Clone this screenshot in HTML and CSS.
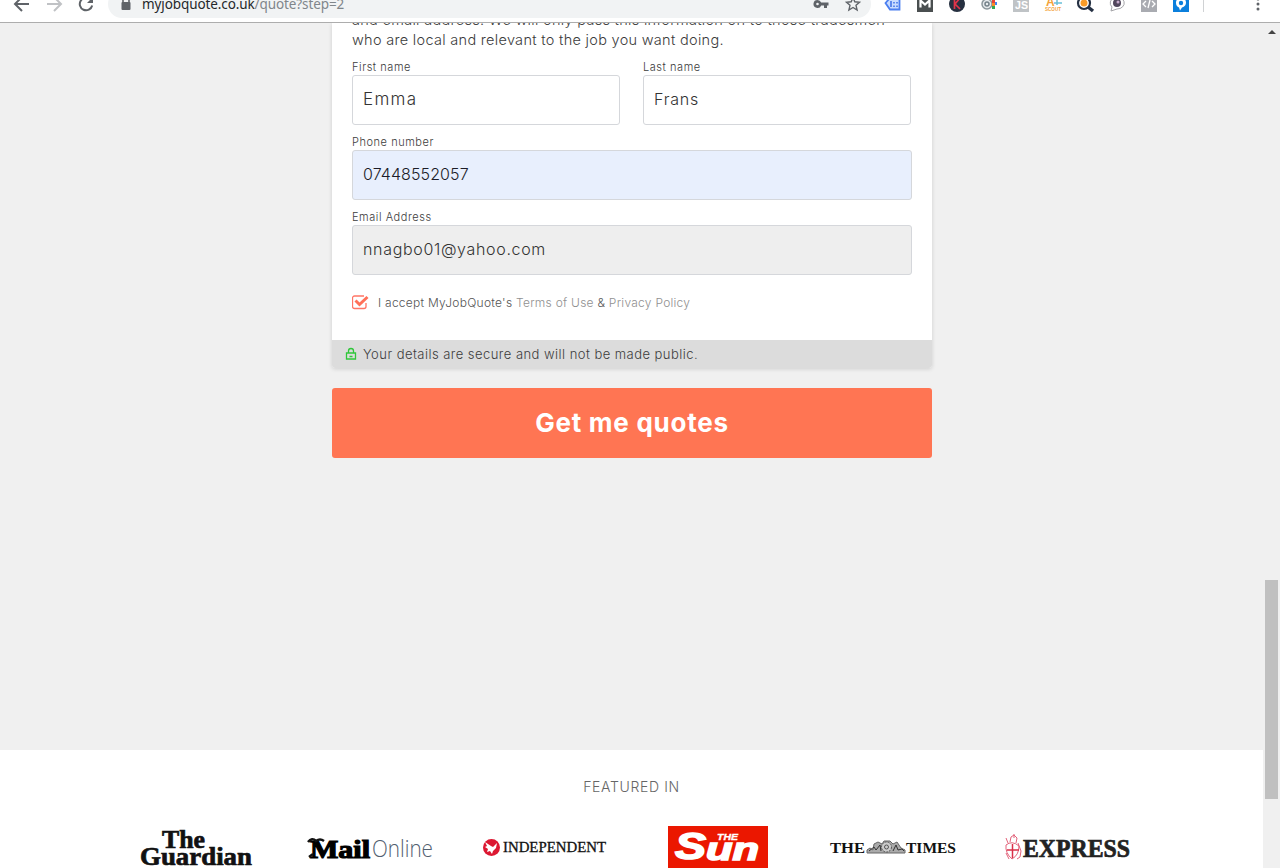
FILE: index.html
```html
<!DOCTYPE html>
<html lang="en">
<head>
<meta charset="utf-8">
<title>MyJobQuote</title>
<link rel="stylesheet" href="styles.css">
</head>
<body>
<header class="browser">
  <div class="toolbar">
    <svg class="cell" viewBox="-16 -16 32 32"><path class="nav" d="M7 0H-6M0-7l-7 7 7 7"/></svg>
    <svg class="cell" viewBox="-16 -16 32 32"><path class="nav pale" d="M-7 0H6M0-7l7 7-7 7"/></svg>
    <svg class="cell" viewBox="-16 -16 32 32"><path class="nav" d="M4.5-4.5A6.3 6.3 0 1 0 6.2 1.5"/><path d="M7-7v6H1z" fill="#5f6368"/></svg>
    <div class="omnibox">
      <svg class="lock" viewBox="0 0 12 16"><path d="M3 7V4a3 3 0 0 1 6 0v3" fill="none" stroke="#5f6368" stroke-width="1.6"/><rect x="1.500" y="6" width="9" height="8" rx="1" fill="#5f6368"/></svg>
      <span class="url"><b>myjobquote.co.uk</b>/quote?step=2</span>
      <svg class="cell key" viewBox="-16 -16 32 32"><path d="M-3.500-4a4 4 0 1 0 3.700 5.500H3V4H6V1.500H7.500V-1.500H.2A4 4 0 0 0-3.500-4zm0 2.700a1.300 1.300 0 1 1 0 2.600 1.300 1.300 0 0 1 0-2.600z" fill="#5f6368"/></svg>
      <svg class="cell" viewBox="-16 -16 32 32"><path d="M0-6.500l1.800 4.300 4.700.4L3 1.300l1.100 4.700L0 3.500-4.100 6-3 1.300l-3.500-3.100 4.700-.4z" fill="none" stroke="#5f6368" stroke-width="1.400"/></svg>
    </div>
    <svg class="cell" viewBox="-16 -16 32 32"><path d="M-7.500-1l4.500-5H6.500V5.500H-3z" fill="#c9dcff" stroke="#4b7ff0" stroke-width="1.800"/><path d="M-2-3v6M1-2v1.500M4-2v1.500M1 1.500v1.500M4 1.500v1.500" stroke="#3c6fe6" stroke-width="1.500"/></svg>
    <svg class="cell" viewBox="-16 -16 32 32"><path d="M-8-8H8V8H-8z" fill="#4a4f50"/><path d="M-4.500 3.500v-7l4.500 4 4.500-4v7" fill="none" stroke="#fff" stroke-width="2.200"/></svg>
    <svg class="cell" viewBox="-16 -16 32 32"><circle r="8" fill="#263040"/><path d="M-2.500-6V5M3-6l-5 6 5 5" fill="none" stroke="#e0344a" stroke-width="1.700"/></svg>
    <svg class="cell" viewBox="-16 -16 32 32"><circle cx="-2" r="5" fill="#e6eaec" stroke="#8c979c" stroke-width="1.500"/><circle cx="-2" r="2" fill="none" stroke="#75828a" stroke-width="1.500"/><path d="M3-5h3v4H3z" fill="#ea4335"/><path d="M3-1h3v3H3z" fill="#fb8c28"/><path d="M3 2h3v3H3z" fill="#34a853"/><path d="M6-2h2v3H6z" fill="#4285f4"/></svg>
    <svg class="cell" viewBox="-16 -16 32 32"><path d="M-8-8H8V8H-8z" fill="#bfc3c6"/><text x="-6" y="5" class="js" textLength="13" lengthAdjust="spacingAndGlyphs">JS</text></svg>
    <svg class="cell" viewBox="-16 -16 32 32"><text x="-7" y="2" class="scout big">A</text><path d="M1-1h8M4-5v6" stroke="#69bfd8" stroke-width="1.500"/><text x="-8" y="7" class="scout" textLength="16" lengthAdjust="spacingAndGlyphs">SCOUT</text></svg>
    <svg class="cell" viewBox="-16 -16 32 32"><circle cx="-1" cy="-1" r="6" fill="#fff" stroke="#263144" stroke-width="2.200"/><circle cx="-1" cy="-1" r="3.500" fill="#f99b28"/><path d="M3 3l5 4" stroke="#263144" stroke-width="3.500"/></svg>
    <svg class="cell" viewBox="-16 -16 32 32"><path d="M-6 7l1-4a7 6 0 1 1 5 2z" fill="#fff" stroke="#a4a4a8"/><circle r="4" cy="-1" fill="#51475c"/><circle cx="1" cy="-2" r="1.500" fill="#c4a8c9"/></svg>
    <svg class="cell" viewBox="-16 -16 32 32"><path d="M-8-8H8V8H-8z" fill="#a9abb1"/><path d="M-3-3l-3 3 3 3M3-3l3 3-3 3M1-4l-2 8" fill="none" stroke="#fff" stroke-width="1.300"/></svg>
    <svg class="cell" viewBox="-16 -16 32 32"><path d="M-8-8H8V8H-8z" fill="#0b7fdc"/><path d="M-5-1a5 5 0 1 1 6 4.500l-2 3-1-3A5 5 0 0 1-5-1z" fill="#fff"/><circle cy="-1" r="2.200" fill="#0b7fdc"/></svg>
    <i class="divider"></i>
    <svg class="cell menu" viewBox="-16 -16 32 32"><g fill="#5f6368"><circle cy="-5" r="1.500"/><circle r="1.500"/><circle cy="5" r="1.500"/></g></svg>
  </div>
</header>
<div class="viewport">
  <main class="page">
    <section class="quote">
      <form class="card">
        <div class="fields">
          <p class="intro">and email address. We will only pass this information on to those tradesmen<br>who are local and relevant to the job you want doing.</p>
          <div class="pair">
            <label class="field"><span class="label">First name</span><span class="input first">Emma</span></label>
            <label class="field"><span class="label">Last name</span><span class="input last">Frans</span></label>
          </div>
          <label class="field"><span class="label">Phone number</span><span class="input filled">07448552057</span></label>
          <label class="field"><span class="label">Email Address</span><span class="input locked">nnagbo01@yahoo.com</span></label>
          <div class="accept">
            <svg class="check" viewBox="0 0 18 16"><path d="M14 9v3.500a2 2 0 0 1-2 2H2.500a2 2 0 0 1-2-2V4a2 2 0 0 1 2-2H12" fill="none" stroke="#ff7566" stroke-width="1.300"/><path d="M3.500 6.500l4 4L15.500 3" fill="none" stroke="#ff7058" stroke-width="3"/></svg>
            <span class="terms">I accept MyJobQuote's <a>Terms of Use</a> &amp; <a>Privacy Policy</a></span>
          </div>
        </div>
        <div class="secure">
          <svg class="padlock" viewBox="0 0 12 14"><path d="M3.500 6V4a2.500 2.500 0 0 1 5 0v2M1.500 6h9v6h-9zM4.500 9.500h3" fill="none" stroke="#2fc63a" stroke-width="1.300"/></svg>
          <span>Your details are secure and will not be made public.</span>
        </div>
      </form>
      <div class="submit"><span>Get me quotes</span></div>
    </section>
    <section class="featured">
      <h2>FEATURED IN</h2>
      <div class="logos">
        <svg viewBox="109 820 174 48"><g class="guardian"><text x="162" y="848" textLength="43" lengthAdjust="spacingAndGlyphs">The</text><text x="140" y="865" textLength="112" lengthAdjust="spacingAndGlyphs">Guardian</text></g></svg>
        <svg viewBox="283 820 174 48"><text class="mail" x="310" y="858" textLength="60" lengthAdjust="spacingAndGlyphs">Mail</text><path d="M308 842q4-5 8-1 4-3 8 0M309 857l4-3" fill="none" stroke="#111" stroke-width="2.500"/><text class="online" x="372" y="857" textLength="61" lengthAdjust="spacingAndGlyphs">Online</text></svg>
        <svg viewBox="457 820 174 48"><circle cx="491.500" cy="847.500" r="8.500" fill="#dc1832"/><path d="M485 842l6 4 2 1 4-4-1 5-3 3-1 3-2-3-3 1 1-3-3-2 2-1z" fill="#fff"/><text class="indy" x="503" y="852" textLength="103" lengthAdjust="spacingAndGlyphs">INDEPENDENT</text></svg>
        <svg viewBox="632 820 174 48"><path d="M668 826h100v42H668z" fill="#eb1700"/><text class="sun" x="675" y="859" textLength="31" lengthAdjust="spacingAndGlyphs" font-size="36">S</text><text class="sun" x="706" y="860" textLength="53" lengthAdjust="spacingAndGlyphs" font-size="31">un</text><text class="sun small" x="717" y="840" textLength="21" lengthAdjust="spacingAndGlyphs" font-size="8.500">THE</text></svg>
        <svg viewBox="806 820 174 48"><text class="times" x="830" y="853" textLength="35" lengthAdjust="spacingAndGlyphs">THE</text><g fill="none" stroke="#666"><path d="M867 853v-3l3-2 3 2 1-6 4-2 4 2 2-3h6l3 3 4-2 4 6 4 2v3z" fill="#aaa"/><circle cx="886.500" cy="847" r="5" fill="#ccc" stroke="#555" stroke-dasharray="2 1"/><circle cx="886.500" cy="847" r="2" stroke="#555"/><path d="M869 851l5-4 2 3 4-5 1 6M893 851l3-6 2 5 4-1 2 2" stroke="#333"/></g><text class="times" x="906" y="853" textLength="50" lengthAdjust="spacingAndGlyphs">TIMES</text></svg>
        <svg viewBox="980 820 174 48"><g fill="none" stroke="#e2627a"><path d="M1006 845q6-5 13 1 0 9-7 13-7-6-6-14z"/><path d="M1007 850h12M1012.500 844v14" stroke="#d92f48" stroke-width="1.500"/><path d="M1010 842l1-5 3-2 3 3-1 5M1014 834v4M1006 838l2 5M1018 843l3 8-1 6-3 2M1006 853l3 6"/></g><text class="express" x="1023" y="857" textLength="107" lengthAdjust="spacingAndGlyphs">EXPRESS</text></svg>
      </div>
    </section>
  </main>
  <aside class="scrollbar"><i class="up"></i><i class="thumb"></i></aside>
</div>
</body>
</html>
```
FILE: styles.css
```css
* { box-sizing: border-box; }
body { margin: 0; width: 1280px; height: 868px; overflow: hidden; display: flex; flex-direction: column; background: #f0f0f0; color: #3c3c3c; font-family: Inter, "Open Sans", sans-serif; font-weight: 300; }
svg { display: block; }
.browser { height: 23px; flex: none; overflow: hidden; background: #fff; border-bottom: 1px solid #adadad; }
.toolbar { display: flex; align-items: center; height: 32px; margin-top: -12px; padding-left: 6px; }
.cell { width: 32px; height: 32px; flex: none; }
.nav { fill: none; stroke: #5f6368; stroke-width: 2; }
.pale { stroke: #c0c2c5; }
.omnibox { display: flex; align-items: center; width: 763px; height: 28px; margin: 0 6px; border-radius: 14px; background: #f1f3f4; padding: 0 2px 0 12px; flex: none; }
.lock { width: 12px; height: 16px; margin-right: 10px; }
.url { font: 400 13.5px "Noto Sans", "Open Sans", sans-serif; color: #80868b; white-space: nowrap; letter-spacing: -.1px; }
.url b { font-weight: 400; color: #25282b; }
.key { margin-left: auto; }
.js { font: 700 10px "Liberation Sans", sans-serif; fill: #fff; }
.scout { font: 700 5.5px "Liberation Sans", sans-serif; fill: #f3a33a; }
.scout.big { font-size: 12px; }
.divider { width: 1px; height: 16px; margin-left: 6px; background: #d0d2d4; }
.menu { margin-left: 38px; }
.viewport { display: flex; flex: 1; min-height: 0; }
.page { width: 1263px; display: flex; flex-direction: column; }
.quote { height: 727px; flex: none; display: flex; flex-direction: column; align-items: center; padding-left: 1px; }
.card { width: 600px; height: 345px; background: #fff; border-radius: 0 0 3px 3px; box-shadow: 0 1px 4px rgba(0,0,0,.14); display: flex; flex-direction: column; clip-path: inset(0 -6px -6px); }
.fields { flex: 1; min-height: 0; padding: 0 20px; }
.intro { margin: -13px 0 8px; font-size: 14.5px; line-height: 20px; white-space: nowrap; letter-spacing: .3px; }
.pair { display: grid; grid-template-columns: 268px 268px; column-gap: 23px; }
.field { display: block; height: 75px; padding-top: 7px; }
.label { display: block; font-size: 11px; line-height: 16px; height: 16px; margin-top: -6px; letter-spacing: .55px; }
.input { display: flex; align-items: center; height: 50px; padding: 0 10px 2px; border: 1px solid #d5d7db; border-radius: 3px; font-size: 16px; color: #333; }
.first { font-size: 17px; letter-spacing: 1.3px; }
.last { letter-spacing: .8px; }
.filled { background: #e8effd; color: #1c1c28; letter-spacing: .1px; }
.locked { background: #eee; letter-spacing: .67px; }
.accept { display: flex; align-items: center; height: 20px; margin-top: 9px; font-size: 12px; color: #555; letter-spacing: .26px; }
.check { width: 18px; height: 16px; margin-right: 8px; }
.accept a { color: #909090; }
.secure { height: 28px; flex: none; display: flex; align-items: center; padding-left: 13px; background: #dcdcdc; border-radius: 0 0 3px 3px; font-size: 13px; letter-spacing: .46px; }
.padlock { width: 12px; height: 14px; margin-right: 6px; }
.submit { width: 600px; height: 70px; margin-top: 20px; padding-bottom: 1px; border-radius: 3px; background: #ff7553; color: #fff; font-size: 26px; font-weight: 700; letter-spacing: .75px; display: flex; align-items: center; justify-content: center; }
.featured { flex: 1; background: #fff; padding: 27px 0 0; display: flex; flex-direction: column; align-items: center; }
h2 { margin: 0; font-size: 14px; font-weight: 300; line-height: 20px; color: #666; letter-spacing: .65px; }
.logos { display: grid; grid-template-columns: repeat(6, 174.3px); margin-top: 23px; }
.logos svg { width: 174px; height: 48px; }
.guardian { font: 700 26px "Liberation Serif", serif; fill: #111; stroke: #111; stroke-width: .7px; }
.mail { font: 700 26px "Liberation Serif", serif; fill: #000; stroke: #000; stroke-width: 1.2px; }
.online { font: 300 24px "Open Sans", sans-serif; fill: #526070; }
.indy { font: 400 14px "Liberation Serif", serif; fill: #111; stroke: #111; stroke-width: .3px; }
.sun { font-family: "Liberation Sans", sans-serif; font-weight: 700; font-style: italic; fill: #fff; stroke: #fff; stroke-width: 1.6px; }
.sun.small { stroke-width: .3px; }
.times { font: 700 15.5px "Liberation Serif", serif; fill: #111; }
.express { font: 700 26px "Liberation Serif", serif; fill: #222; stroke: #222; stroke-width: .7px; }
.scrollbar { width: 17px; padding: 7px 2px 0; background: #f0f0f0; display: flex; flex-direction: column; align-items: center; }
.up { border: 4px solid transparent; border-top: 0; border-bottom: 4px solid #444; }
.thumb { width: 13px; height: 219px; margin-top: 546px; background: #c0c0c0; }
```
